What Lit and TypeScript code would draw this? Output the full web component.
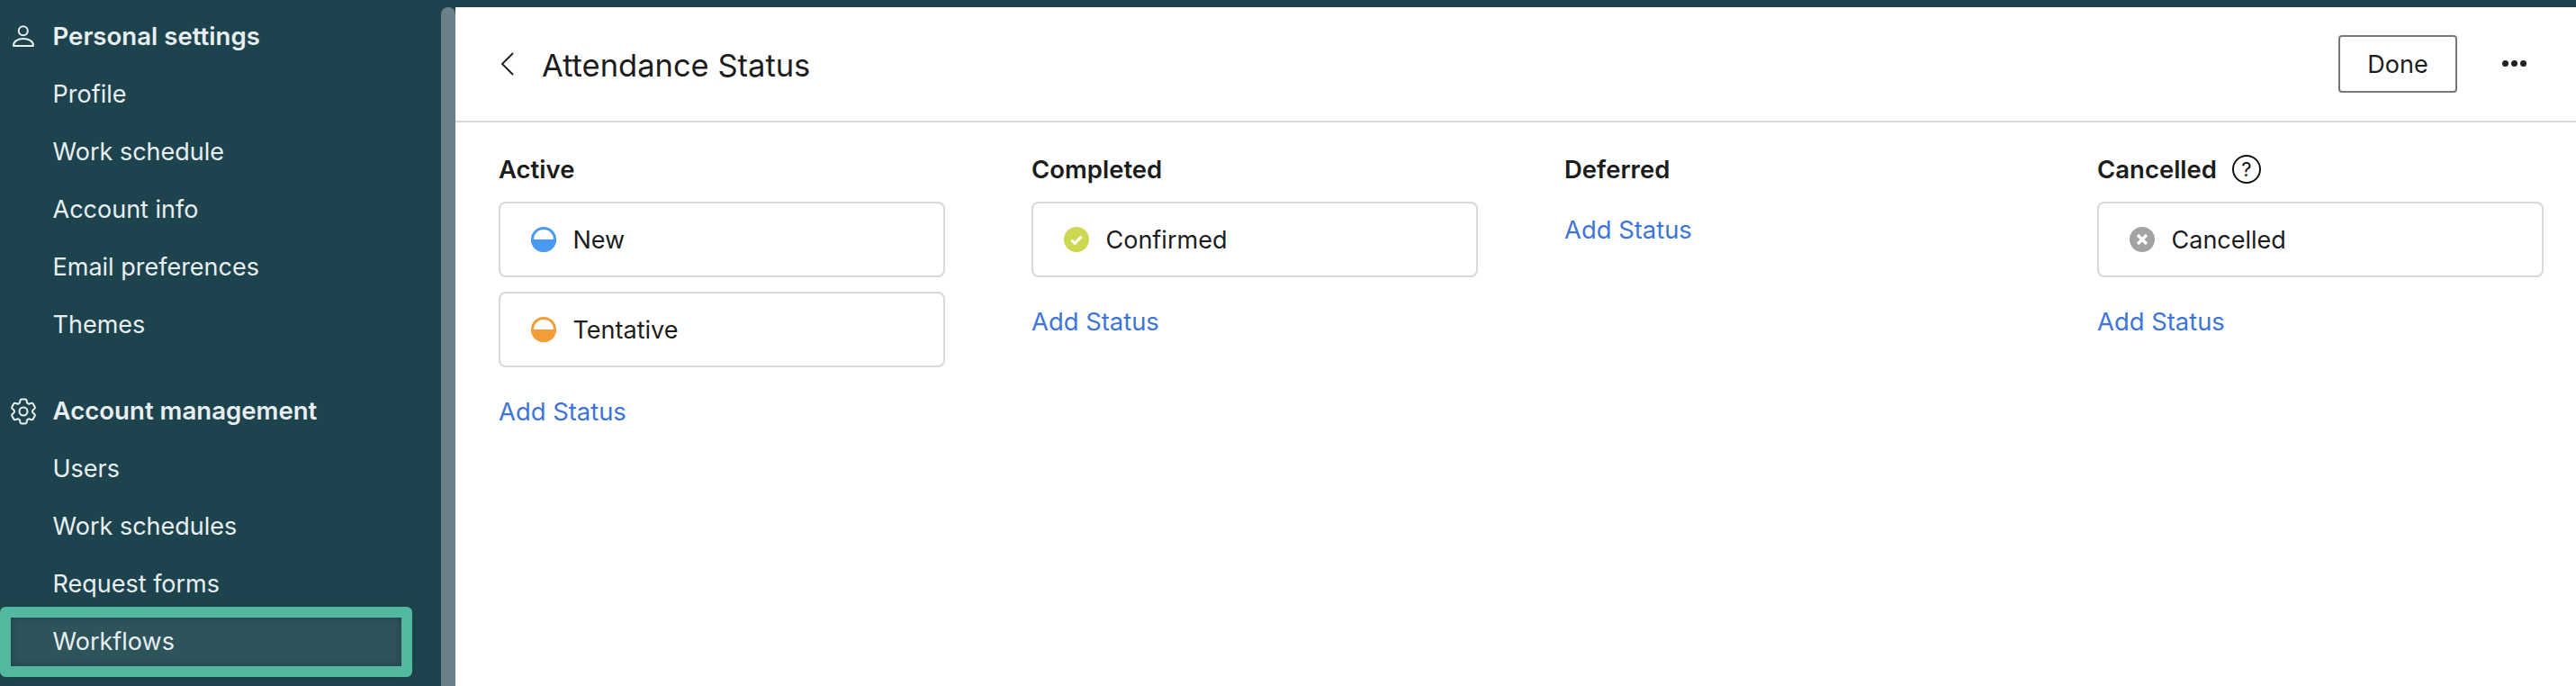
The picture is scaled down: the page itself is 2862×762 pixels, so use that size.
import { LitElement, html, css, svg } from "lit";
import { customElement } from "lit/decorators.js";

const personIcon = svg`<svg class="side-icon" width="28" height="28" viewBox="0 0 28 28" fill="none" stroke="currentColor" stroke-width="2"><circle cx="13.8" cy="8.3" r="5"/><path d="M3 24.5c0-4.5 4.6-7.5 11-7.5s11 3 11 7.5c0 .3-.2.5-.5.5h-21c-.3 0-.5-.2-.5-.5z"/></svg>`;
const gearIcon = svg`<svg class="side-icon gear" width="30" height="30" viewBox="2 2 20 20" fill="none" stroke="currentColor" stroke-width="1.35" stroke-linejoin="round"><path d="M9.594 3.94c.09-.542.56-.94 1.11-.94h2.593c.55 0 1.02.398 1.11.94l.213 1.281c.063.374.313.686.645.87.074.04.147.083.22.127.325.196.72.257 1.075.124l1.217-.456a1.125 1.125 0 0 1 1.37.49l1.296 2.247a1.125 1.125 0 0 1-.26 1.431l-1.003.827c-.293.241-.438.613-.43.992a7.723 7.723 0 0 1 0 .255c-.008.378.137.75.43.991l1.004.827c.424.35.534.955.26 1.43l-1.298 2.247a1.125 1.125 0 0 1-1.369.491l-1.217-.456c-.355-.133-.75-.072-1.076.124a6.47 6.47 0 0 1-.22.128c-.331.183-.581.495-.644.869l-.213 1.281c-.09.543-.56.94-1.11.94h-2.594c-.55 0-1.019-.398-1.11-.94l-.213-1.281c-.062-.374-.312-.686-.644-.87a6.52 6.52 0 0 1-.22-.127c-.325-.196-.72-.257-1.076-.124l-1.217.456a1.125 1.125 0 0 1-1.369-.49l-1.297-2.247a1.125 1.125 0 0 1 .26-1.431l1.004-.827c.292-.24.437-.613.43-.991a6.932 6.932 0 0 1 0-.255c.007-.38-.138-.751-.43-.992l-1.004-.827a1.125 1.125 0 0 1-.26-1.43l1.297-2.247a1.125 1.125 0 0 1 1.37-.491l1.216.456c.356.133.751.072 1.076-.124.072-.044.146-.086.22-.128.332-.183.582-.495.644-.869l.214-1.28Z"/><circle cx="12" cy="12" r="3"/></svg>`;

function halfIcon(color: string) {
  return svg`<svg class="status-icon" width="28" height="28" viewBox="0 0 28 28"><circle cx="14" cy="14" r="12.5" fill="#fff" stroke=${color} stroke-width="3"/><path d="M0 14a14 14 0 0 0 28 0z" fill=${color}/></svg>`;
}
const checkIcon = svg`<svg class="status-icon" width="28" height="28" viewBox="0 0 28 28"><circle cx="14" cy="14" r="14" fill="#cdd752"/><path d="M8.3 14.6l3.8 3.7 7.6-7.6" fill="none" stroke="#fff" stroke-width="3.2"/></svg>`;
const crossIcon = svg`<svg class="status-icon" width="28" height="28" viewBox="0 0 28 28"><circle cx="14" cy="14" r="14" fill="#a3a3a3"/><path d="M9 9l10 10M19 9L9 19" fill="none" stroke="#fff" stroke-width="3.4"/></svg>`;

interface Col { title: string; help?: boolean; cards: { name: string; icon: unknown }[]; }
const columns: Col[] = [
  { title: "Active", cards: [
    { name: "New", icon: halfIcon("#4a9bf0") },
    { name: "Tentative", icon: halfIcon("#f49e3a") },
  ] },
  { title: "Completed", cards: [{ name: "Confirmed", icon: checkIcon }] },
  { title: "Deferred", cards: [] },
  { title: "Cancelled", help: true, cards: [{ name: "Cancelled", icon: crossIcon }] },
];

@customElement("app-root")
export class AppRoot extends LitElement {
  static styles = css`
    :host { display: block; width: 2862px; height: 762px; overflow: hidden; background: #1d444e; font-family: Inter, "Noto Sans", sans-serif; }
    .page { display: flex; height: 762px; padding-top: 8px; box-sizing: border-box; }
    .sidebar { width: 490px; flex: none; color: #e9eef0; font-size: 27px; }
    .scroll { width: 16px; flex: none; background: #6b8089; border-radius: 8px 8px 0 0; }
    .head, .item { height: 64px; display: flex; align-items: center; padding-left: 58.5px; position: relative; }
    .head { font-weight: 600; font-size: 27.6px; }
    .section + .section { margin-top: 32px; }
    .side-icon { position: absolute; left: 12px; top: 18px; }
    .side-icon.gear { left: 11px; }
    .item.active .hl { position: absolute; left: 0; top: -6px; width: 458px; height: 78px; box-sizing: border-box; border: 12px solid #52b8a0; border-radius: 6px; background: #2d535b; box-shadow: inset 0 0 8px rgba(0,0,0,.25), 0 0 12px rgba(0,0,0,.12); }
    .item span { position: relative; }
    .main { flex: 1; background: #fff; color: #1c1c1c; min-width: 0; }
    .topbar { height: 128px; box-sizing: border-box; border-bottom: 2px solid #d8d8d8; display: flex; align-items: center; padding: 0 55px 0 50px; }
    .back { width: 16px; height: 26px; margin-right: 30px; flex: none; }
    .title { font-size: 34.5px; flex: 1; padding-top: 3px; }
    .done { width: 132px; height: 64px; box-sizing: border-box; border: 2px solid #777; border-radius: 4px; background: #fff; font: inherit; font-size: 27px; color: #1c1c1c; margin-right: 50px; padding: 0; }
    .dots { display: flex; gap: 3px; margin-bottom: 2px; }
    .dots i { width: 7px; height: 7px; border-radius: 50%; background: #222; }
    .cols { display: grid; grid-template-columns: repeat(4, 496px); column-gap: 96px; padding: 34px 0 0 48px; }
    .col-title { height: 36px; display: flex; align-items: center; gap: 17px; font-size: 27.5px; font-weight: 600; margin-bottom: 18px; }
    .card { height: 84px; box-sizing: border-box; border: 2px solid #d8d8d8; border-radius: 8px; display: flex; align-items: center; padding-left: 34px; gap: 18.5px; font-size: 27px; margin-bottom: 16px; }
    .add { font-size: 27.4px; color: #3d74d9; height: 40px; line-height: 40px; margin-top: 29px; }
    .help { width: 32px; height: 32px; box-sizing: border-box; border: 2px solid #111; border-radius: 50%; display: flex; align-items: center; justify-content: center; font-size: 22px; font-weight: 400; color: #111; }
  `;

  render() {
    const personal = ["Profile", "Work schedule", "Account info", "Email preferences", "Themes"];
    const account = ["Users", "Work schedules", "Request forms"];
    return html`<div class="page">
      <nav class="sidebar">
        <div class="section">
          <div class="head">${personIcon}Personal settings</div>
          ${personal.map((t) => html`<div class="item"><span>${t}</span></div>`)}
        </div>
        <div class="section">
          <div class="head">${gearIcon}Account management</div>
          ${account.map((t) => html`<div class="item"><span>${t}</span></div>`)}
          <div class="item active"><div class="hl"></div><span>Workflows</span></div>
        </div>
      </nav>
      <div class="scroll"></div>
      <main class="main">
        <header class="topbar">
          <svg class="back" viewBox="0 0 16 26" fill="none" stroke="#222" stroke-width="2"><path d="M14 1L2 13l12 12"/></svg>
          <div class="title">Attendance Status</div>
          <button class="done">Done</button>
          <div class="dots"><i></i><i></i><i></i></div>
        </header>
        <section class="cols">
          ${columns.map((c) => html`<div class="col">
            <div class="col-title">${c.title}${c.help ? html`<span class="help">?</span>` : ""}</div>
            ${c.cards.map((k) => html`<div class="card">${k.icon}<span>${k.name}</span></div>`)}
            <div class="add">Add Status</div>
          </div>`)}
        </section>
      </main>
    </div>`;
  }
}
